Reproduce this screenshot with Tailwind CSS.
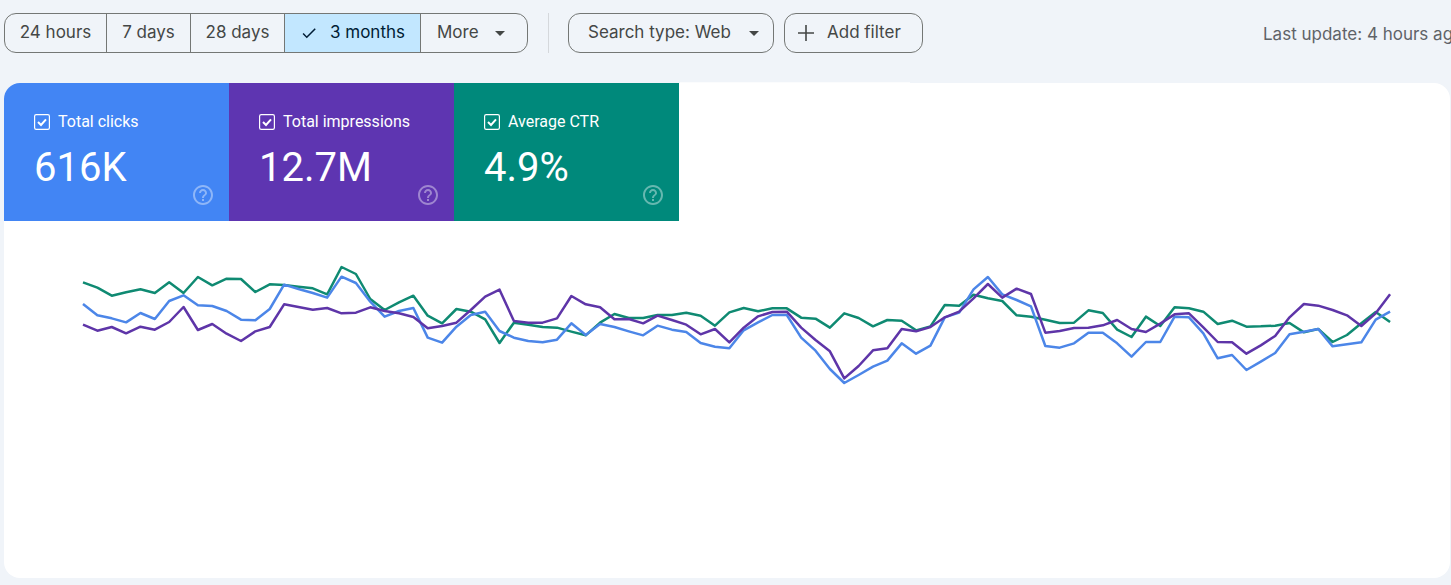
<!DOCTYPE html>
<html lang="en">
<head>
    <meta charset="UTF-8">
    <title>Performance</title>
    <script src="https://cdn.jsdelivr.net/npm/@tailwindcss/browser@4"></script>
</head>
<body class="bg-[#f0f4f9] h-[585px] overflow-hidden font-['Roboto',sans-serif]">
    <!-- Filter bar -->
    <div class="flex items-start h-[82px] pl-1 pt-[13px] whitespace-nowrap overflow-hidden text-[17px] text-[#444746] font-['Inter',sans-serif]">
        <div class="flex shrink-0 h-10 border border-[#747775] rounded-xl overflow-hidden">
            <div class="w-[102px] flex items-center justify-center border-r border-[#747775]">24 hours</div>
            <div class="w-[84px] flex items-center justify-center border-r border-[#747775]">7 days</div>
            <div class="w-[94px] flex items-center justify-center border-r border-[#747775]">28 days</div>
            <div class="w-[136px] flex items-center justify-center gap-3 bg-[#c2e7ff] text-[#001d35] border-r border-[#747775]">
                <svg class="w-[18px] h-[18px]" viewBox="0 0 24 24" fill="#001d35"><path d="M9 16.2 4.8 12l-1.4 1.4L9 19 21 7l-1.4-1.4z"/></svg>
                <span>3 months</span>
            </div>
            <div class="w-[106px] flex items-center pl-4">
                <span>More</span>
                <svg class="w-[10px] h-[5px] ml-[16px]" viewBox="0 0 10 5" fill="#444746"><path d="M0 0h10L5 5z"/></svg>
            </div>
        </div>
        <div class="w-px shrink-0 h-10 bg-[#d5d8dc] ml-5 mr-[19px]"></div>
        <div class="flex shrink-0 items-center h-10 w-[206px] pl-[19px] border border-[#747775] rounded-xl">
            <span>Search type: Web</span>
            <svg class="w-[10px] h-[5px] ml-auto mr-[14px]" viewBox="0 0 10 5" fill="#444746"><path d="M0 0h10L5 5z"/></svg>
        </div>
        <div class="flex shrink-0 items-center h-10 w-[139px] ml-[10px] pl-[12px] gap-[12px] border border-[#747775] rounded-xl">
            <svg class="w-[18px] h-[18px]" viewBox="0 0 18 18" fill="#444746"><path d="M8.2 1h1.6v7.2H17v1.6H9.8V17H8.2V9.8H1V8.2h7.2z"/></svg>
            <span>Add filter</span>
        </div>
        <div class="shrink-0 ml-[340px] mt-[9px] text-[#5f6368]">Last update: 4 hours ago</div>
    </div>
    <div class="ml-[680px] w-[230px] h-px bg-white/70"></div>

    <!-- Main card -->
    <div class="ml-1 mr-px h-[495px] bg-white rounded-2xl overflow-hidden">
        <div class="flex text-white">
            <div class="w-[225px] h-[138px] flex flex-col pl-[30px] pr-[14px] pt-[29px] pb-[14px] bg-[#4285f4]">
                <div class="flex items-center gap-2 h-5 text-[16px] leading-5">
                    <svg class="w-4 h-4" viewBox="0 0 16 16" fill="none" stroke="#fff"><rect x=".6" y=".6" width="14.8" height="14.8" rx="1.6" stroke-width="1.2"/><path d="m4 8 3 3 5-5.6" stroke-width="2"/></svg>
                    <span>Total clicks</span>
                </div>
                <div class="text-[40px] leading-[30px] mt-[21px]">616K</div>
                <svg class="w-6 h-6 shrink-0 mt-auto self-end opacity-40" viewBox="0 0 24 24" fill="#fff"><path d="M11 18h2v-2h-2v2zm1-16C6.48 2 2 6.48 2 12s4.48 10 10 10 10-4.48 10-10S17.52 2 12 2zm0 18c-4.41 0-8-3.59-8-8s3.59-8 8-8 8 3.59 8 8-3.59 8-8 8zm0-14c-2.21 0-4 1.79-4 4h2c0-1.1.9-2 2-2s2 .9 2 2c0 2-3 1.75-3 5h2c0-2.25 3-2.5 3-5 0-2.21-1.79-4-4-4z"/></svg>
            </div>
            <div class="w-[225px] h-[138px] flex flex-col pl-[30px] pr-[14px] pt-[29px] pb-[14px] bg-[#5e35b1]">
                <div class="flex items-center gap-2 h-5 text-[16px] leading-5">
                    <svg class="w-4 h-4" viewBox="0 0 16 16" fill="none" stroke="#fff"><rect x=".6" y=".6" width="14.8" height="14.8" rx="1.6" stroke-width="1.2"/><path d="m4 8 3 3 5-5.6" stroke-width="2"/></svg>
                    <span>Total impressions</span>
                </div>
                <div class="text-[40px] leading-[30px] mt-[21px]">12.7M</div>
                <svg class="w-6 h-6 shrink-0 mt-auto self-end opacity-40" viewBox="0 0 24 24" fill="#fff"><path d="M11 18h2v-2h-2v2zm1-16C6.48 2 2 6.48 2 12s4.48 10 10 10 10-4.48 10-10S17.52 2 12 2zm0 18c-4.41 0-8-3.59-8-8s3.59-8 8-8 8 3.59 8 8-3.59 8-8 8zm0-14c-2.21 0-4 1.79-4 4h2c0-1.1.9-2 2-2s2 .9 2 2c0 2-3 1.75-3 5h2c0-2.25 3-2.5 3-5 0-2.21-1.79-4-4-4z"/></svg>
            </div>
            <div class="w-[225px] h-[138px] flex flex-col pl-[30px] pr-[14px] pt-[29px] pb-[14px] bg-[#00897b]">
                <div class="flex items-center gap-2 h-5 text-[16px] leading-5">
                    <svg class="w-4 h-4" viewBox="0 0 16 16" fill="none" stroke="#fff"><rect x=".6" y=".6" width="14.8" height="14.8" rx="1.6" stroke-width="1.2"/><path d="m4 8 3 3 5-5.6" stroke-width="2"/></svg>
                    <span>Average CTR</span>
                </div>
                <div class="text-[40px] leading-[30px] mt-[21px]">4.9%</div>
                <svg class="w-6 h-6 shrink-0 mt-auto self-end opacity-40" viewBox="0 0 24 24" fill="#fff"><path d="M11 18h2v-2h-2v2zm1-16C6.48 2 2 6.48 2 12s4.48 10 10 10 10-4.48 10-10S17.52 2 12 2zm0 18c-4.41 0-8-3.59-8-8s3.59-8 8-8 8 3.59 8 8-3.59 8-8 8zm0-14c-2.21 0-4 1.79-4 4h2c0-1.1.9-2 2-2s2 .9 2 2c0 2-3 1.75-3 5h2c0-2.25 3-2.5 3-5 0-2.21-1.79-4-4-4z"/></svg>
            </div>
        </div>
        <!-- Chart: one unit is a third of a pixel -->
        <svg class="block w-[1307px] h-[150px] ml-[79px] mt-[34px] overflow-visible" viewBox="0 0 3921 450" fill="none" stroke-width="7.5" stroke-linejoin="round">
            <polyline id="ctr" stroke="#0f8a72"/>
            <polyline id="clicks" stroke="#4c86e8"/>
            <polyline id="impressions" stroke="#5e35a8"/>
        </svg>
    </div>

    <script>
        const series = {
            ctr: [82,98,122,112,103,114,82,114,66,91,71,72,111,88,90,95,100,118,36,57,132,165,
                142,122,182,205,162,170,193,264,203,209,216,218,230,241,203,177,189,189,180,180,173,182,
                212,172,159,169,160,160,188,191,218,175,189,214,195,197,226,214,150,152,119,130,138,181,185,194,
                204,203,166,174,224,246,185,213,157,160,170,207,197,215,214,212,204,232,222,261,240,205,171,201],
            clicks: [147,181,190,202,174,192,138,121,151,153,168,194,196,162,89,102,114,128,65,84,140,185,
                168,159,248,263,215,180,170,228,248,258,262,254,205,240,207,216,229,241,212,224,231,264,
                275,280,226,202,180,180,248,287,342,384,360,335,317,265,296,272,187,173,103,66,118,135,154,273,
                278,265,233,233,265,305,261,261,185,187,235,310,300,345,320,294,238,230,222,274,268,262,194,170],
            impressions: [209,227,216,235,215,224,201,156,225,207,236,258,229,216,148,156,164,159,175,173,157,168,
                175,186,220,213,203,165,125,104,198,203,203,190,123,148,157,193,192,205,182,195,209,238,
                222,262,218,184,171,170,218,255,289,370,333,286,280,222,229,216,187,170,130,87,128,101,117,233,
                228,219,218,211,195,222,231,206,178,175,217,261,262,296,271,243,187,147,152,165,181,213,175,118]
        };

        for (const id in series) {
            const pts = series[id].map((y, i) => (i * 43.09).toFixed(1) + ',' + y);
            document.getElementById(id).setAttribute('points', pts.join(' '));
        }
    </script>
</body>
</html>
